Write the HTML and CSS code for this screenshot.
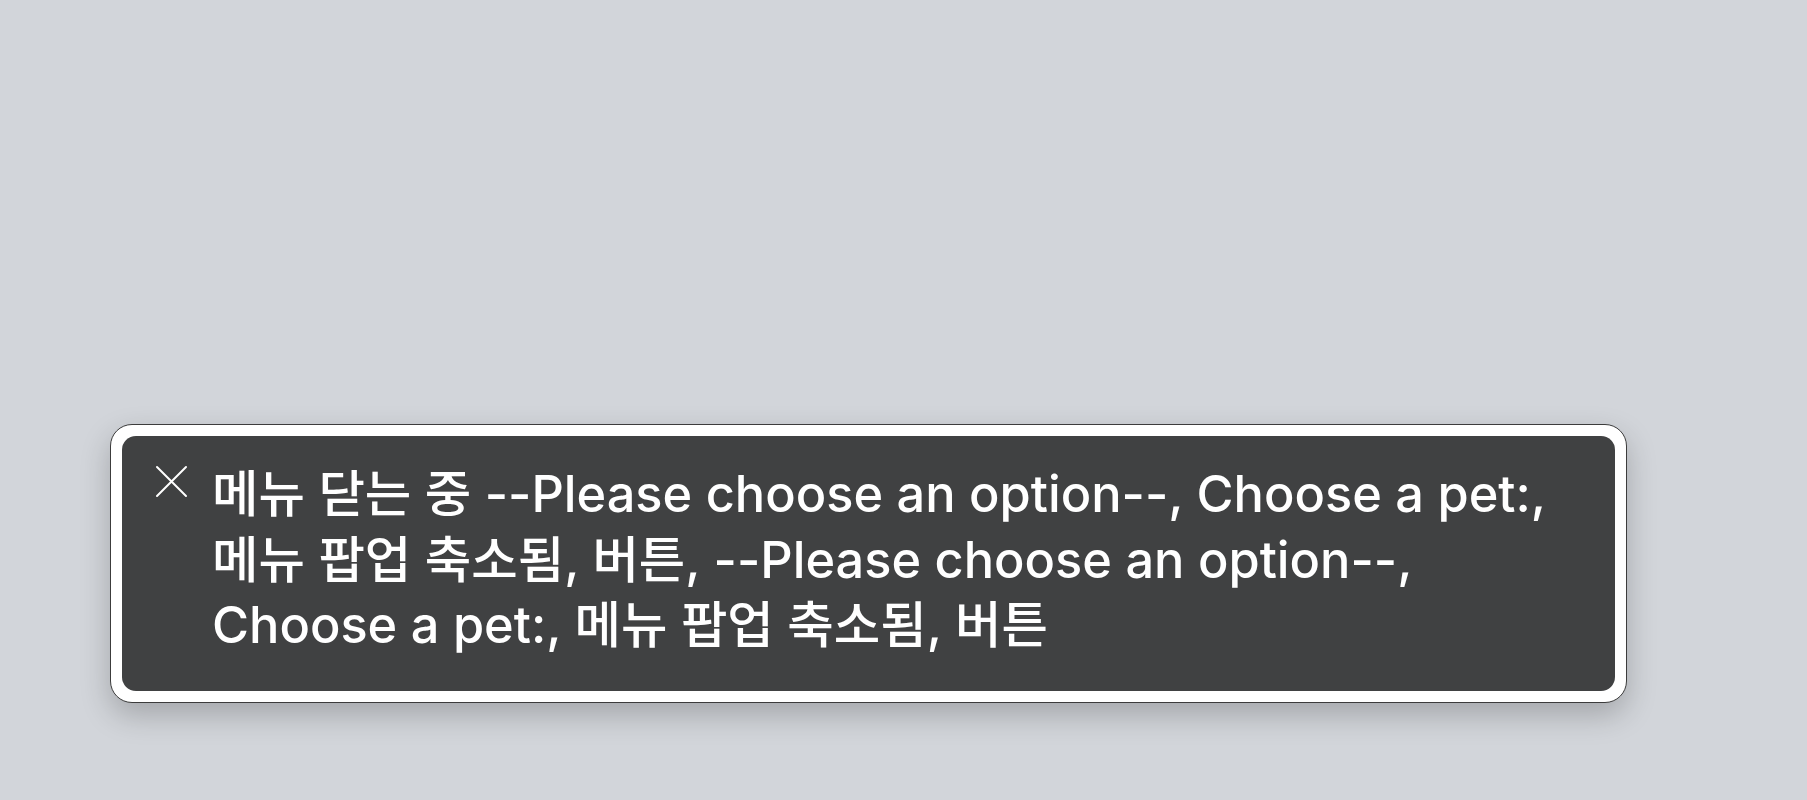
FILE: index.html
```html
<!DOCTYPE html>
<html>

<head>
    <meta charset="UTF-8">
    <meta name="viewport" content="width=device-width,initial-scale=1">
    <link rel="stylesheet" href="styles.css">
    <title>Caption Panel</title>
</head>

<body>
    <div class="stage">
        <div class="caption-frame">
            <div class="caption">
                <svg class="close-icon" viewBox="0 0 33 33" width="33" height="33">
                    <path d="M2 2 L31 31 M31 2 L2 31" stroke="#fff" stroke-width="2" stroke-linecap="round" fill="none"/>
                </svg>
                <p class="caption-text">메뉴 닫는 중 --Please choose an option--, Choose a pet:,<br>메뉴 팝업 축소됨, 버튼, --Please choose an option--,<br>Choose a pet:, 메뉴 팝업 축소됨, 버튼</p>
            </div>
        </div>
    </div>
</body>

</html>
```

FILE: styles.css
```css
*,
*::before,
*::after {
    box-sizing: border-box;
    padding: 0;
    margin: 0;
}

body {
    height: 100vh;
    overflow: hidden;
    background: rgb(210, 213, 218);
    font-family: Inter, "Noto Sans CJK KR", sans-serif;
}

.stage {
    padding: 424px 0 0 110px;
}

.caption-frame {
    width: 1517px;
    height: 279px;
    padding: 11px;
    background: #fff;
    border: 1px solid #3c3c3c;
    border-radius: 22px;
    box-shadow: 0 12px 30px 0 rgba(0, 0, 0, 0.22);
}

.caption {
    display: flex;
    align-items: flex-start;
    gap: 24px;
    height: 100%;
    padding: 25px 30px 0 33px;
    background: rgb(64, 65, 66);
    border-radius: 14px;
}

.close-icon {
    flex: none;
    margin-top: 4px;
}

.caption-text {
    color: #fff;
    font-size: 50.5px;
    font-weight: 500;
    line-height: 65.5px;
    white-space: nowrap;
}
```
